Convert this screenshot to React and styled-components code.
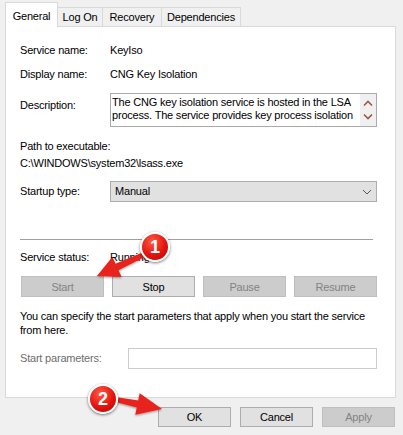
import React from "react"
import styled, { createGlobalStyle } from "styled-components"

const GlobalStyle = createGlobalStyle`
  html, body {
    margin: 0;
    padding: 0;
    background: #f0f0f0;
  }
  body {
    font-family: "Liberation Sans", Arial, sans-serif;
  }
`

const Window = styled.div`
  position: relative;
  width: 403px;
  height: 435px;
  box-sizing: border-box;
  padding-top: 2px;
  background: #f0f0f0;
  font-size: 11px;
  letter-spacing: -0.2px;
  color: #000;
  overflow: hidden;
`

const TabStrip = styled.div`
  display: flex;
  align-items: flex-end;
  height: 24px;
  margin-left: 5px;
`

const Tab = styled.div`
  position: relative;
  z-index: ${p => (p.$active ? 1 : 0)};
  box-sizing: border-box;
  width: ${p => p.$w}px;
  height: ${p => (p.$active ? 25 : 19)}px;
  margin-left: ${p => (p.$first ? 0 : -1)}px;
  margin-bottom: ${p => (p.$active ? -1 : 0)}px;
  padding-top: ${p => (p.$active ? 6 : 1)}px;
  border: 1px solid #d9d9d9;
  border-bottom: none;
  background: ${p => (p.$active ? "#fff" : "#f0f0f0")};
  line-height: ${p => (p.$active ? 15 : 17)}px;
  text-align: center;
  white-space: nowrap;
`

const Panel = styled.div`
  box-sizing: border-box;
  width: 391px;
  height: 372px;
  margin-left: 5px;
  padding: 16px 18px 0 14px;
  border: 1px solid #d9d9d9;
  background: #fff;
  display: flex;
  flex-direction: column;
`

const FieldRow = styled.div`
  display: grid;
  grid-template-columns: ${p => p.$label || 90}px 1fr;
  align-items: ${p => p.$align || "center"};
  margin-top: ${p => p.$mt || 0}px;
  line-height: 15px;
`

const Label = styled.div`
  color: ${p => (p.$muted ? "#6d6d6d" : "#000")};
  padding-top: ${p => p.$pt || 0}px;
`

const DescBox = styled.div`
  box-sizing: border-box;
  height: 34px;
  display: flex;
  border: 1px solid #ababab;
  background: #fff;
`

const DescText = styled.div`
  flex: 1;
  padding: 2px 0 0 1px;
  line-height: 12.5px;
  overflow: hidden;
`

const ScrollBar = styled.div`
  width: 16px;
  background: #f0f0f0;
  display: flex;
  flex-direction: column;
  justify-content: space-around;
  align-items: center;
  padding: 3px 0;
  box-sizing: border-box;
`

const PathBlock = styled.div`
  margin-top: 11px;
  line-height: 17px;
`

const Combo = styled.div`
  box-sizing: border-box;
  height: 21px;
  display: flex;
  align-items: center;
  justify-content: space-between;
  padding: 0 4px 0 4px;
  border: 1px solid #adadad;
  background: #e1e1e1;
`

const Separator = styled.div`
  height: 1px;
  margin: 37px 4px 0 0;
  background: #a0a0a0;
`

const ButtonRow = styled.div`
  display: grid;
  grid-template-columns: repeat(4, 1fr);
  gap: 8px;
  margin: 11px 0 0 1px;
`

const Button = styled.button`
  box-sizing: border-box;
  width: ${p => (p.$w ? `${p.$w}px` : "auto")};
  height: ${p => p.$h || 21}px;
  padding: 0;
  border: 1px solid ${p => (p.disabled ? "#bfbfbf" : "#adadad")};
  background: ${p => (p.disabled ? "#cccccc" : "#e1e1e1")};
  color: ${p => (p.disabled ? "#838383" : "#000")};
  font: inherit;
  letter-spacing: inherit;
`

const Note = styled.p`
  margin: 12px 0 0 0;
  line-height: 14px;
`

const Input = styled.div`
  box-sizing: border-box;
  height: 21px;
  border: 1px solid #cccccc;
  background: #fff;
`

const Footer = styled.div`
  display: flex;
  justify-content: flex-end;
  gap: 9px;
  margin: 9px 8px 0 0;
`

const Badge = styled.div`
  position: absolute;
  left: ${p => p.$x}px;
  top: ${p => p.$y}px;
  width: 30px;
  height: 30px;
  box-sizing: border-box;
  border-radius: 50%;
  border: 2px solid #fff;
  background: radial-gradient(circle at 40% 30%, #ff5a45 0%, #e3140f 55%, #b80000 100%);
  box-shadow: 0 1px 3px rgba(0, 0, 0, 0.55);
  color: #fff;
  font-weight: bold;
  font-size: 18px;
  letter-spacing: 0;
  display: flex;
  align-items: center;
  justify-content: center;
`

const Overlay = styled.svg`
  position: absolute;
  left: 0;
  top: 0;
  pointer-events: none;
`

const Chevron = ({ up, color = "#9a5a48" }) => (
  <svg width="10" height="7" viewBox="0 0 10 7">
    <polyline
      points={up ? "1,5.5 5,1.5 9,5.5" : "1,1.5 5,5.5 9,1.5"}
      fill="none"
      stroke={color}
      strokeWidth="1.6"
    />
  </svg>
)

export default function App() {
  return (
    <>
      <GlobalStyle />
      <Window>
        <TabStrip>
          <Tab $active $first $w={53}>General</Tab>
          <Tab $w={46}>Log On</Tab>
          <Tab $w={60}>Recovery</Tab>
          <Tab $w={80}>Dependencies</Tab>
        </TabStrip>
        <Panel>
          <FieldRow>
            <Label>Service name:</Label>
            <div>KeyIso</div>
          </FieldRow>
          <FieldRow $mt={9}>
            <Label>Display name:</Label>
            <div>CNG Key Isolation</div>
          </FieldRow>
          <FieldRow $mt={11} $align="start">
            <Label $pt={5}>Description:</Label>
            <DescBox>
              <DescText>
                The CNG key isolation service is hosted in the LSA
                <br />
                process. The service provides key process isolation
              </DescText>
              <ScrollBar>
                <Chevron up />
                <Chevron />
              </ScrollBar>
            </DescBox>
          </FieldRow>
          <PathBlock>
            Path to executable:
            <br />
            C:\WINDOWS\system32\lsass.exe
          </PathBlock>
          <FieldRow $mt={9}>
            <Label>Startup type:</Label>
            <Combo>
              <span>Manual</span>
              <svg width="10" height="6" viewBox="0 0 10 6">
                <polyline points="1,1 5,5 9,1" fill="none" stroke="#555" strokeWidth="1" />
              </svg>
            </Combo>
          </FieldRow>
          <Separator />
          <FieldRow $mt={10}>
            <Label>Service status:</Label>
            <div>Running</div>
          </FieldRow>
          <ButtonRow>
            <Button disabled>Start</Button>
            <Button>Stop</Button>
            <Button disabled>Pause</Button>
            <Button disabled>Resume</Button>
          </ButtonRow>
          <Note>
            You can specify the start parameters that apply when you start the service
            <br />
            from here.
          </Note>
          <FieldRow $mt={11} $label={108}>
            <Label $muted>Start parameters:</Label>
            <Input />
          </FieldRow>
        </Panel>
        <Footer>
          <Button $w={73} $h={20}>OK</Button>
          <Button $w={73} $h={20}>Cancel</Button>
          <Button $w={73} $h={20} disabled>Apply</Button>
        </Footer>

        <Overlay width="403" height="435" viewBox="0 0 403 435">
          <defs>
            <filter id="sh" x="-20%" y="-20%" width="140%" height="140%">
              <feDropShadow dx="0" dy="1" stdDeviation="0.8" floodColor="#000" floodOpacity="0.4" />
            </filter>
          </defs>
          <polygon
            points="142,252.7 115.5,263.8 112.4,257 97,276 121.6,277 118.5,270.2 144,257.3"
            fill="#e8201a"
            filter="url(#sh)"
          />
          <polygon
            points="118.5,397.5 138.2,400.6 139.7,393.2 162,409 135.3,414.8 136.8,407.4 117.5,402.5"
            fill="#e8201a"
            filter="url(#sh)"
          />
        </Overlay>
        <Badge $x={140} $y={232}>1</Badge>
        <Badge $x={88} $y={384}>2</Badge>
      </Window>
    </>
  )
}
